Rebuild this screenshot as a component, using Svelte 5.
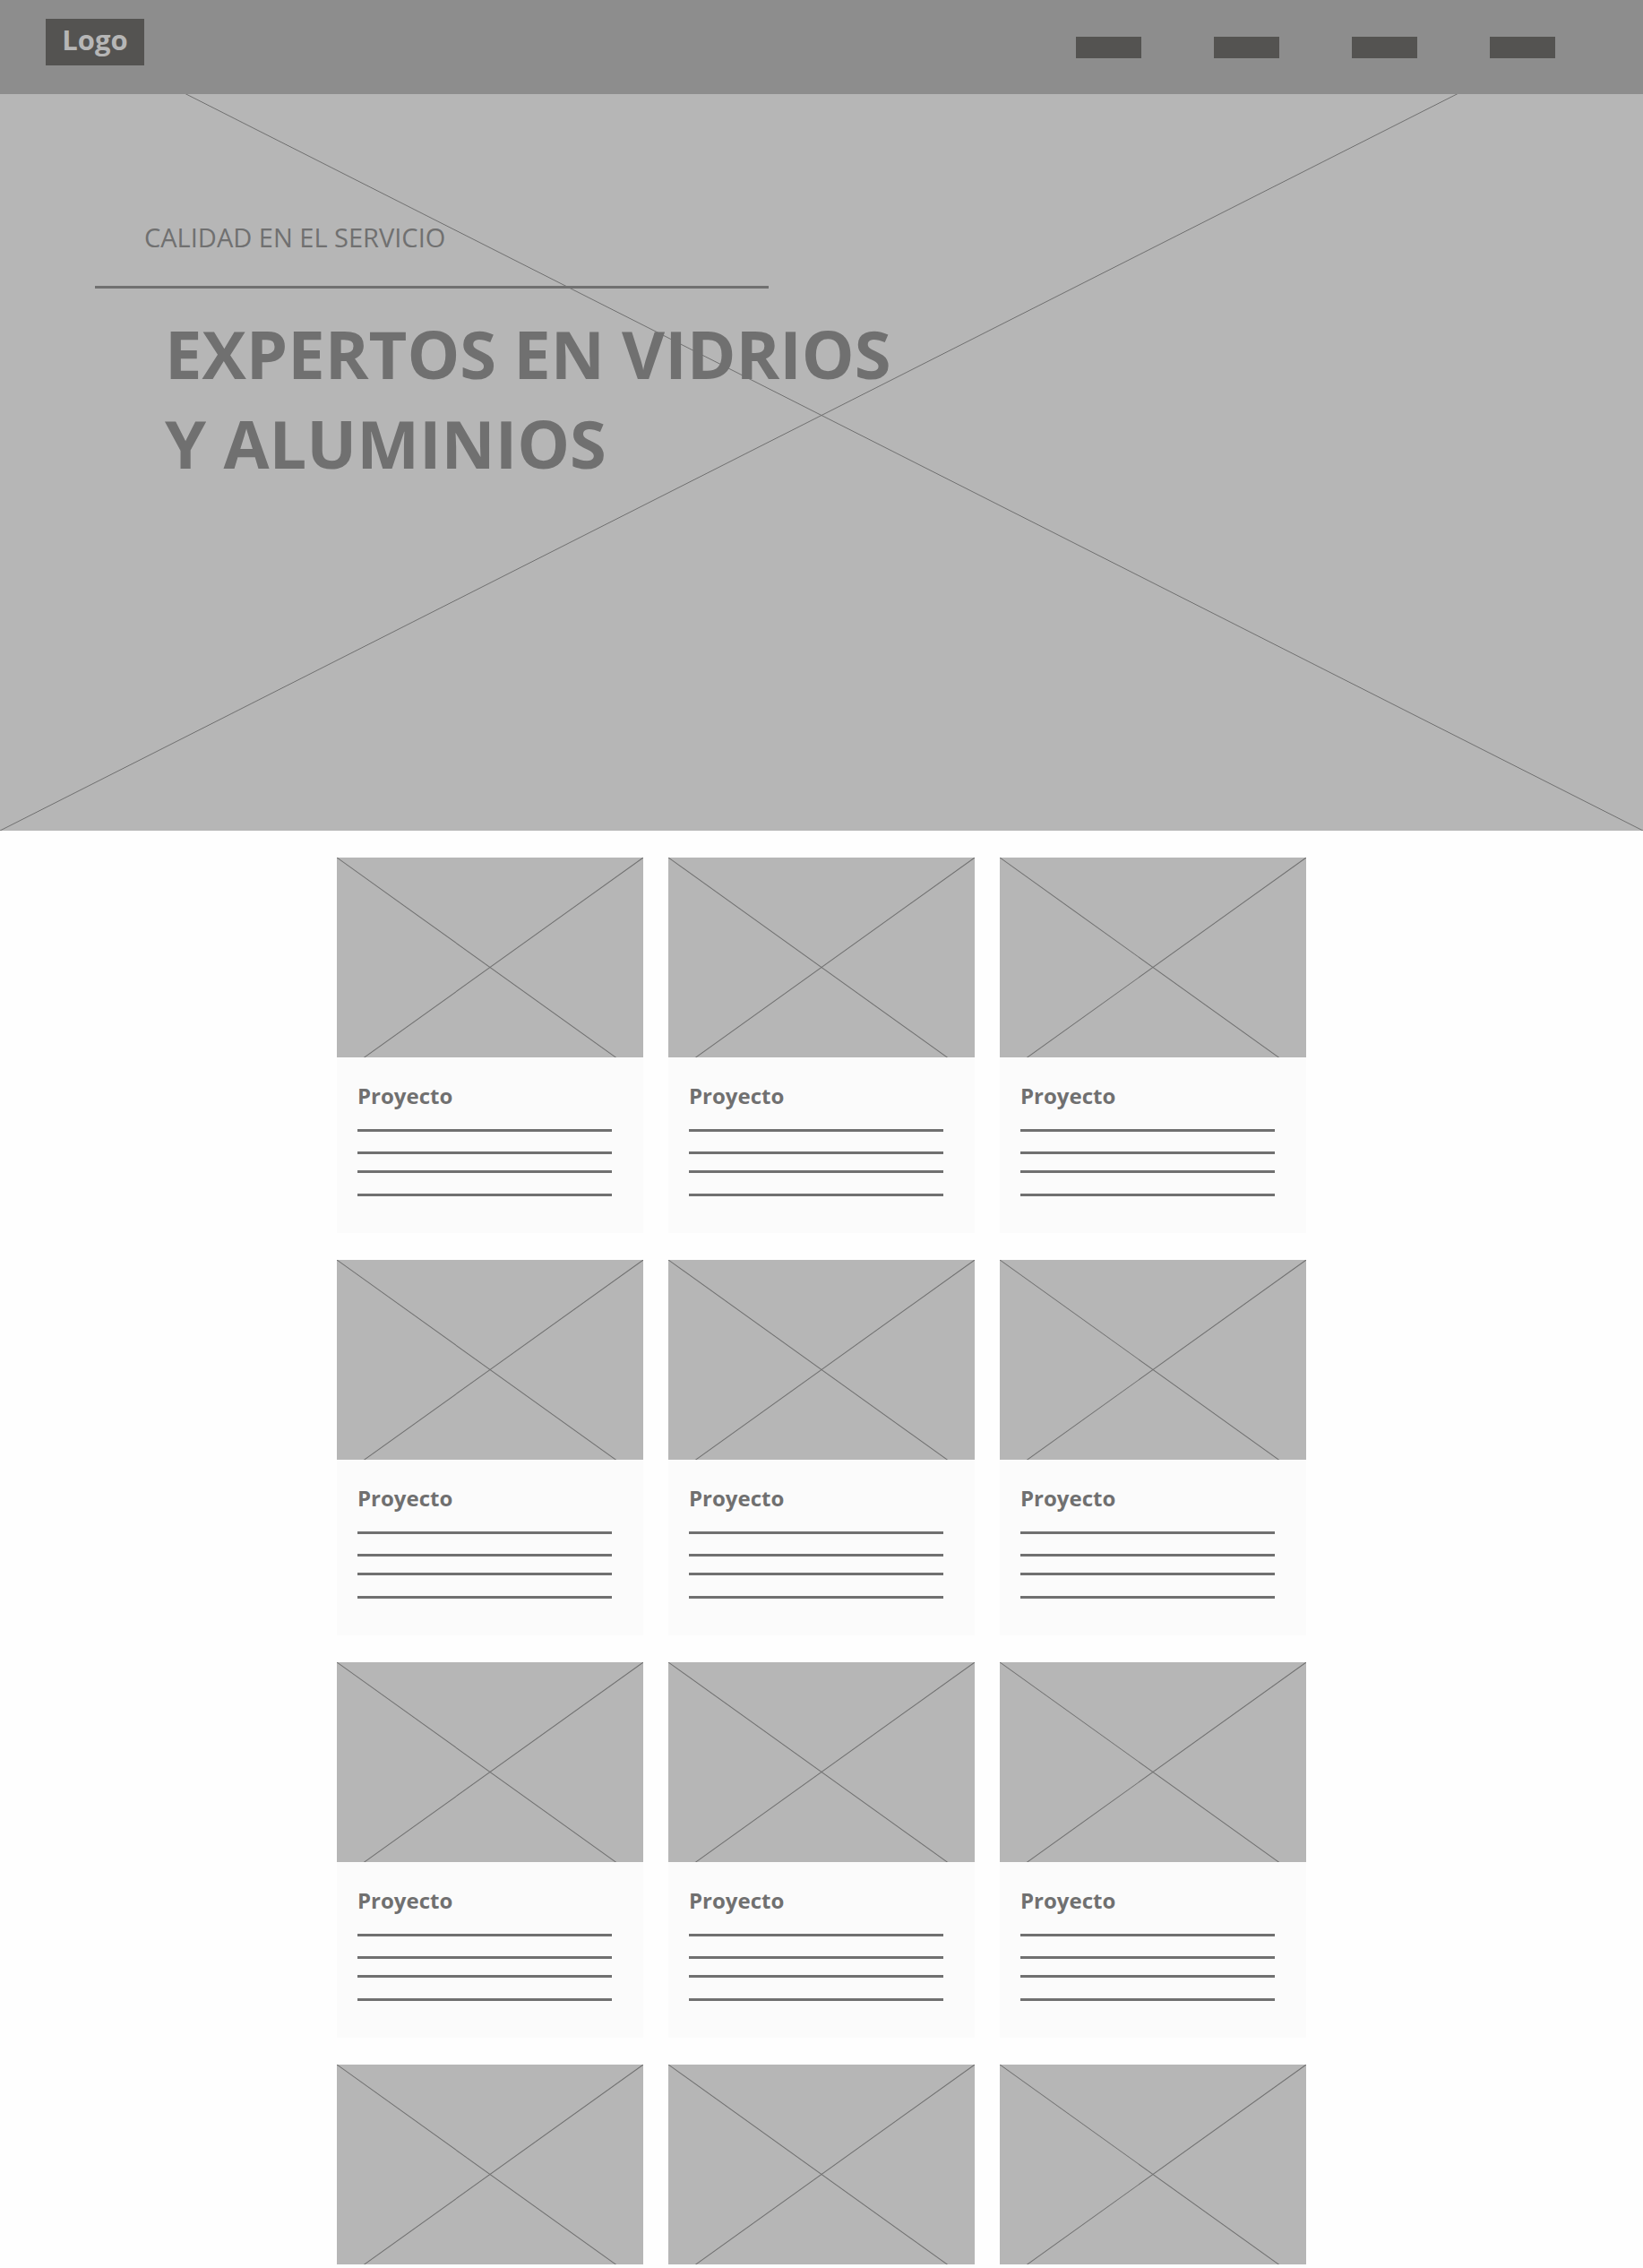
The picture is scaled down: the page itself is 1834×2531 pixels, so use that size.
<script lang="ts">
  const navItems = ['Inicio', 'Servicios', 'Proyectos', 'Contacto'];
  const projects = Array.from({ length: 12 }, (_, i) => ({ id: i + 1, open: i < 9 }));
</script>

<div class="top">
  <svg class="cross" aria-hidden="true">
    <line x1="0" y1="0" x2="100%" y2="100%" />
    <line x1="0" y1="100%" x2="100%" y2="0" />
  </svg>

  <header>
    <a class="logo" href="#inicio">Logo</a>
    <nav aria-label="Principal">
      {#each navItems as item}
        <a href="#{item.toLowerCase()}" aria-label={item}></a>
      {/each}
    </nav>
  </header>

  <section class="hero">
    <p>CALIDAD EN EL SERVICIO</p>
    <hr />
    <h1>EXPERTOS EN VIDRIOS<br />Y ALUMINIOS</h1>
  </section>
</div>

<main>
  {#each projects as project (project.id)}
    <article>
      <svg class="thumb" viewBox="0 0 342 223" preserveAspectRatio="none" aria-hidden="true">
        <line x1="0" y1="0" x2="342" y2="245" />
        <line x1="0" y1="245" x2="342" y2="0" />
      </svg>
      {#if project.open}
        <div class="body">
          <h2>Proyecto</h2>
          <div class="lines">
            <span></span><span></span><span></span><span></span>
          </div>
        </div>
      {/if}
    </article>
  {/each}
</main>

<style>
  :global(body) {
    margin: 0;
    background: #fefefe;
    color: #707070;
    font-family: 'Open Sans', 'Noto Sans', sans-serif;
  }

  .top {
    position: relative;
    background: #b6b6b6;
  }

  .cross {
    position: absolute;
    inset: 0;
    width: 100%;
    height: 100%;
  }

  line {
    stroke: #707070;
    stroke-width: 1;
  }

  header {
    position: relative;
    display: flex;
    justify-content: space-between;
    align-items: flex-start;
    box-sizing: border-box;
    height: 105px;
    padding: 21px 98px 0 51px;
    background: #8d8d8d;
  }

  .logo {
    width: 110px;
    height: 52px;
    background: #545351;
    color: #b6b6b6;
    font-size: 31px;
    font-weight: 700;
    line-height: 46px;
    text-align: center;
    text-decoration: none;
  }

  nav {
    display: flex;
    gap: 81px;
    padding-top: 20px;
  }

  nav a {
    width: 73px;
    height: 24px;
    background: #545351;
  }

  .hero {
    position: relative;
    box-sizing: border-box;
    min-height: 822px;
    padding: 140px 106px 0;
  }

  .hero p {
    margin: 0 0 0 55px;
    font-size: 29px;
    line-height: 40px;
  }

  hr {
    width: 752px;
    max-width: 100%;
    height: 3px;
    margin: 34px 0 23px;
    border: 0;
    background: #707070;
  }

  h1 {
    margin: 0 0 0 78px;
    font-size: 74px;
    font-weight: 700;
    line-height: 100px;
  }

  main {
    display: grid;
    grid-template-columns: repeat(3, 1fr);
    gap: 30px 28px;
    width: 59%;
    margin: 0 auto;
    padding: 30px 0 4px;
  }

  article {
    display: flex;
    flex-direction: column;
  }

  .thumb {
    display: block;
    width: 100%;
    height: 223px;
    background: #b6b6b6;
  }

  .body {
    padding: 28px 35px 41px 23px;
    background: #fbfbfb;
  }

  h2 {
    margin: 0 0 22px;
    font-size: 24px;
    font-weight: 700;
    line-height: 30px;
  }

  .lines {
    display: grid;
    grid-template-rows: 25px 21px 26px 3px;
  }

  .lines span {
    height: 3px;
    background: #707070;
  }
</style>
